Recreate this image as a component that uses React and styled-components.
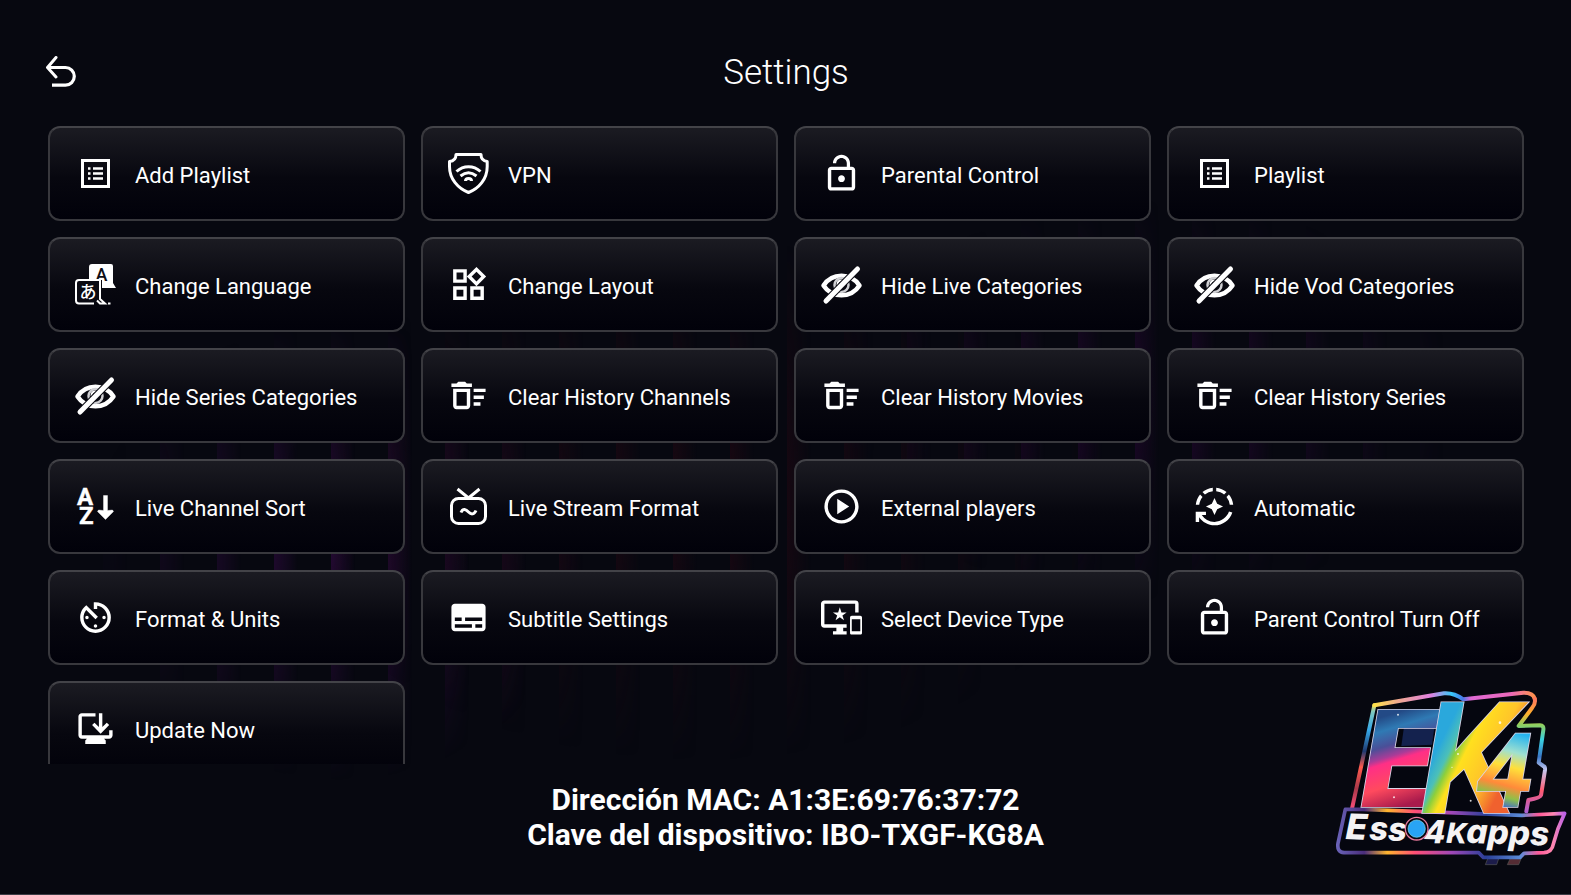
import React from "react";
import styled, { createGlobalStyle } from "styled-components";
import {
  MdLockOpen,
  MdOutlineWidgets,
  MdOutlineDeleteSweep,
  MdOutlinePlayCircle,
  MdAutoMode,
  MdAvTimer,
  MdSubtitles,
  MdImportantDevices,
  MdOutlineBrowserUpdated,
} from "react-icons/md";

const GlobalStyle = createGlobalStyle`
  *, *::before, *::after { box-sizing: border-box; }
  body {
    margin: 0;
    background: #070810;
    color: #fff;
    font-family: Roboto, "Noto Sans", sans-serif;
  }
`;

const Screen = styled.div`
  position: relative;
  isolation: isolate;
  display: flex;
  flex-direction: column;
  height: 100vh;
  overflow: hidden;
  border-bottom: 1px solid #3b3c45;
`;

const Glow = styled.div`
  position: absolute;
  inset: 0;
  z-index: -1;
  background: repeating-linear-gradient(
    90deg,
    ${(p) => p.$color} 0,
    transparent 24px,
    transparent 57px
  );
  background-position: ${(p) => p.$start} 0;
  mask-image: ${(p) => p.$mask};
`;

const Header = styled.header`
  display: grid;
  grid-template-columns: 1fr auto 1fr;
  align-items: center;
  height: 126px;
  padding: 19px 44px 0 45px;
  flex: none;
`;

const BackButton = styled.button`
  justify-self: start;
  display: grid;
  padding: 0;
  border: 0;
  background: none;
  color: inherit;
  cursor: pointer;
`;

const Title = styled.h1`
  margin: 0;
  font-size: 35px;
  font-weight: 300;
  line-height: 44px;
`;

const Grid = styled.main`
  flex: 1;
  min-height: 0;
  overflow: hidden;
  display: grid;
  grid-template-columns: repeat(4, minmax(0, 1fr));
  grid-auto-rows: 95px;
  gap: 16px;
  padding: 0 47px 0 48px;
`;

const Card = styled.button`
  display: flex;
  align-items: center;
  gap: 19px;
  padding: 0 25px;
  border: 2px solid #38383d;
  border-top-color: #434348;
  border-radius: 12px;
  background: linear-gradient(#1b1b22, #07070f 55%, #01010a);
  color: inherit;
  font: inherit;
  font-size: 22px;
  line-height: 28px;
  text-align: left;
  white-space: nowrap;
  cursor: pointer;

  svg {
    flex: none;
    width: 41px;
    height: 41px;
    overflow: visible;
  }
`;

const CardLabel = styled.span`
  padding-top: 4px;
`;

const DeviceInfo = styled.footer`
  flex: none;
  height: 130px;
  padding-top: 18px;
  text-align: center;
  font-size: 30px;
  font-weight: 700;
  line-height: 35px;

  p { margin: 0; }
`;

const LogoBadge = styled.div`
  position: absolute;
  right: 0;
  bottom: 0;
  width: 251px;
  height: 214px;

  svg { display: block; }
`;

const Svg = ({ children, ...rest }) => (
  <svg viewBox="0 0 41 41" fill="none" stroke="currentColor" aria-hidden="true" {...rest}>
    {children}
  </svg>
);

const ListIcon = () => (
  <Svg>
    <rect x="7.5" y="7.5" width="26" height="26" strokeWidth="3" />
    <path d="M18 15.500h10M18 20.500h10M18 25.500h10M13 15.500h2.500M13 20.500h2.500M13 25.500h2.500" strokeWidth="2.600" />
  </Svg>
);

const ShieldIcon = () => (
  <Svg strokeWidth="3" strokeLinejoin="round">
    <path d="M8 1.500h25c0 4 2 6.500 6.200 7v5C39.200 26 31 35.500 20.500 39.500 10 35.500 1.500 26 1.500 13.500v-5C6 8 8 5.500 8 1.500z" />
    <path d="M8.500 18.500c7-6.500 17-6.500 24 0M12.500 23c5-4 11-4 16 0" />
    <path d="M17.500 28c0-3.200 6-3.200 6 0" />
  </Svg>
);

const LanguageIcon = () => (
  <Svg stroke="none" fill="currentColor">
    <path d="M17 0h19a2 2 0 0 1 2 2v17l3 5h-14v-8H14V3a3 3 0 0 1 3-3z" />
    <text x="26.500" y="17" fontSize="18" fontWeight="500" textAnchor="middle" fill="#0d0d15" fontFamily="Roboto">A</text>
    <path d="M19 39.500H4a3 3 0 0 1-3-3V19a3 3 0 0 1 3-3h21v19l5 4.500h-5l-3-3" fill="#0a0a12" stroke="currentColor" strokeWidth="2" />
    <path d="M33 39.500h2.500" stroke="currentColor" strokeWidth="2" />
    <text x="13" y="34" fontSize="17" fontWeight="500" textAnchor="middle" fontFamily="'Noto Sans CJK JP', sans-serif">あ</text>
  </Svg>
);

const EyeOffIcon = () => (
  <Svg strokeLinecap="round" strokeLinejoin="round">
    <path d="M2.500 21.500C11 8.500 30 8.500 38.500 21.500 30 34.500 11 34.500 2.500 21.500z" strokeWidth="4.500" />
    <circle cx="20.500" cy="21" r="7" strokeWidth="2.500" stroke="#d0d0d4" />
    <path d="M16.500 20.500c0-3 2-4 4-4" strokeWidth="2" />
    <path d="M5 37L36.500 5" stroke="#0b0b13" strokeWidth="7" strokeLinecap="butt" />
    <path d="M5 37L36.500 5" strokeWidth="5" />
  </Svg>
);

const SortIcon = () => (
  <Svg fill="currentColor" strokeWidth="0.400">
    <text fontFamily="Roboto" fontWeight="700" fontSize="24">
      <tspan x="2" y="19">A</tspan>
      <tspan x="4" y="38">Z</tspan>
    </text>
    <path d="M28.500 9.500h4v15l5-.5 1 1.500-8 8-8-8 1-1.500 5 .5z" />
  </Svg>
);

const TvIcon = () => (
  <Svg strokeWidth="3">
    <path d="M9.500 3l11 9 11-9" />
    <rect x="3.500" y="12.500" width="34" height="25" rx="7" />
    <path d="M13 26.500c2-5 5-3 7.500-.5s5.500 3 7.500-1.500" />
  </Svg>
);

const items = [
  ["Add Playlist", ListIcon],
  ["VPN", ShieldIcon],
  ["Parental Control", MdLockOpen],
  ["Playlist", ListIcon],
  ["Change Language", LanguageIcon],
  ["Change Layout", MdOutlineWidgets],
  ["Hide Live Categories", EyeOffIcon],
  ["Hide Vod Categories", EyeOffIcon],
  ["Hide Series Categories", EyeOffIcon],
  ["Clear History Channels", MdOutlineDeleteSweep],
  ["Clear History Movies", MdOutlineDeleteSweep],
  ["Clear History Series", MdOutlineDeleteSweep],
  ["Live Channel Sort", SortIcon],
  ["Live Stream Format", TvIcon],
  ["External players", MdOutlinePlayCircle],
  ["Automatic", MdAutoMode],
  ["Format & Units", MdAvTimer],
  ["Subtitle Settings", MdSubtitles],
  ["Select Device Type", MdImportantDevices],
  ["Parent Control Turn Off", MdLockOpen],
  ["Update Now", MdOutlineBrowserUpdated],
];

const Gradient = ({ id, from, to, stops }) => (
  <linearGradient id={id} gradientUnits="userSpaceOnUse" x1={from[0]} y1={from[1]} x2={to[0]} y2={to[1]}>
    {stops.map(([offset, color]) => (
      <stop key={offset} offset={offset} stopColor={color} />
    ))}
  </linearGradient>
);

const Logo = () => (
  <svg viewBox="0 0 753 642" width="251" height="214" role="img" aria-label="EK4 Esso4Kapps">
    <defs>
      <Gradient id="rimLeft" from={[0, 70]} to={[0, 390]} stops={[[0, "#ffe14a"], [0.08, "#7fc8c0"], [0.25, "#35a8e8"], [0.45, "#203a70"], [0.6, "#ff5a4d"], [0.8, "#a8384a"], [1, "#ff4f7a"]]} />
      <Gradient id="rimTop" from={[163, 0]} to={[646, 0]} stops={[[0, "#ffe14a"], [0.15, "#f0a890"], [0.35, "#e080e0"], [0.48, "#38c8f8"], [0.55, "#4878e8"], [0.6, "#e06ad6"], [0.85, "#ea68b8"], [1, "#ff9448"]]} />
      <Gradient id="rimRight" from={[0, 60]} to={[0, 400]} stops={[[0, "#ff7a5c"], [0.12, "#ffb02c"], [0.22, "#8fd060"], [0.35, "#39d0e0"], [0.5, "#3a78c8"], [0.62, "#c8c8f0"], [0.8, "#ff5a70"], [1, "#a860d8"]]} />
      <Gradient id="plate" from={[50, 0]} to={[740, 0]} stops={[[0, "#6a63b8"], [0.12, "#4a2d7c"], [0.22, "#ffb52e"], [0.34, "#ff4f76"], [0.5, "#a048b8"], [0.65, "#2a3f98"], [0.8, "#5b8bd8"], [0.88, "#ff5a98"], [0.94, "#ff88b0"], [1, "#b25cf0"]]} />
      <Gradient id="fillE" from={[190, 110]} to={[270, 370]} stops={[[0, "#234a86"], [0.15, "#2f7ab4"], [0.32, "#4a4f98"], [0.44, "#a83c98"], [0.5, "#ff2f86"], [0.75, "#ff4a5e"], [1, "#a81a4c"]]} />
      <Gradient id="fillK" from={[360, 190]} to={[560, 290]} stops={[[0, "#2aa8dc"], [0.16, "#4cc0b8"], [0.24, "#8ccf3c"], [0.36, "#ffe01e"], [0.7, "#ffc42a"], [1, "#f0612e"]]} />
      <Gradient id="fill4" from={[610, 165]} to={[550, 385]} stops={[[0, "#27b4ee"], [0.25, "#9fe0d0"], [0.45, "#ffe03a"], [0.7, "#ff8a3a"], [0.85, "#8fc048"], [1, "#3a66d8"]]} />
    </defs>
    <path d="M496 554l12-30h32l-10 30z" fill="#1c1c4a" stroke="#555" strokeWidth="2" />
    <path d="M562 554l14-30h32l-12 30z" fill="#542c34" stroke="#555" strokeWidth="2" />
    <path d="M96 386L163 76 372 40q30-2 58 14L610 36q42 0 36 40l-48 60 62-2q12 0 10 14l-14 100 18 8q6 2 5 12l-12 78q-2 10-34 12l-4 40z" fill="#05060f" />
    <g fill="none" strokeWidth="12" strokeLinejoin="round" strokeLinecap="round">
      <path d="M96 386L163 76" stroke="url(#rimLeft)" />
      <path d="M163 76L372 40q30-2 58 18L610 38q30 0 34 18" stroke="url(#rimTop)" />
      <path d="M644 56q4 14-8 28l-40 54 64-2q12 0 10 14l-14 98 14 10q6 2 5 12l-12 76q-2 8-38 14l-6 34" stroke="url(#rimRight)" />
    </g>
    <path d="M76 388l50 0 480 18 128-6-20 46-14 46q-4 24-28 26l-60 2-12 12H490l-14-14H72q-22-2-18-28z" fill="#05060f" stroke="url(#plate)" strokeWidth="11" strokeLinejoin="round" />
    <path d="M252 140l92-4-8 58-92 4z" fill="#14224e" />
    <text fontFamily="Roboto" fontStyle="italic" stroke="#d9d4e8" strokeWidth="5" paintOrder="stroke">
      <tspan x="124" y="382" fontSize="410" fontWeight="900" fill="url(#fillE)">E</tspan>
      <tspan x="302" y="400" fontSize="464" fontWeight="700" fill="url(#fillK)">K</tspan>
      <tspan x="468" y="382" fontSize="310" fontWeight="700" fill="url(#fill4)">4</tspan>
    </text>
    <g fill="#fff" opacity=".8">
      <circle cx="540" cy="128" r="4" />
      <circle cx="414" cy="222" r="3" />
      <circle cx="396" cy="262" r="2" />
      <circle cx="452" cy="362" r="3" />
      <circle cx="234" cy="104" r="3" />
      <circle cx="222" cy="352" r="3" />
    </g>
    <g transform="rotate(2 80 480)" fontFamily="Inter, sans-serif" fontWeight="800" fontStyle="italic" fill="#f5f3f4">
      <text>
        <tspan x="76" y="477" fontSize="106">E</tspan>
        <tspan x="147" y="477" fontSize="98">ss</tspan>
        <tspan x="310" y="480" fontSize="96">4</tspan>
        <tspan x="378" y="478" fontSize="84">K</tspan>
        <tspan x="438" y="476" fontSize="100">apps</tspan>
      </text>
    </g>
    <circle cx="290" cy="446" r="34" fill="#05060f" stroke="#e87a9c" strokeWidth="4" />
    <circle cx="290" cy="446" r="26" fill="#28a4f4" stroke="#7fe0f8" strokeWidth="2" />
  </svg>
);

export default function App() {
  return (
    <Screen>
      <GlobalStyle />
      <Glow $start="46px" $color="#260a36" $mask="radial-gradient(250px 230px at 340px 550px, #000, transparent)" />
      <Glow $start="46px" $color="#1a0812" $mask="radial-gradient(420px 260px at 700px 500px, #000, transparent)" />
      <Glow $start="52px" $color="#1c0728" $mask="radial-gradient(320px 200px at 1150px 400px, #000, transparent)" />
      <Header>
        <BackButton type="button" aria-label="Back">
          <svg width="34" height="34" viewBox="0 0 34 34" fill="none" stroke="currentColor" strokeWidth="3.200">
            <path d="M11 1.500L2.500 11.500l8.500 9.500" strokeWidth="3" strokeLinejoin="round" strokeLinecap="round" />
            <path d="M3 11.500h17.500a8.800 8.800 0 0 1 0 17.600H7" />
          </svg>
        </BackButton>
        <Title>Settings</Title>
      </Header>
      <Grid>
        {items.map(([label, Icon]) => (
          <Card key={label} type="button">
            <Icon aria-hidden="true" />
            <CardLabel>{label}</CardLabel>
          </Card>
        ))}
      </Grid>
      <DeviceInfo>
        <p>Dirección MAC: A1:3E:69:76:37:72</p>
        <p>Clave del dispositivo: IBO-TXGF-KG8A</p>
      </DeviceInfo>
      <LogoBadge>
        <Logo />
      </LogoBadge>
    </Screen>
  );
}
